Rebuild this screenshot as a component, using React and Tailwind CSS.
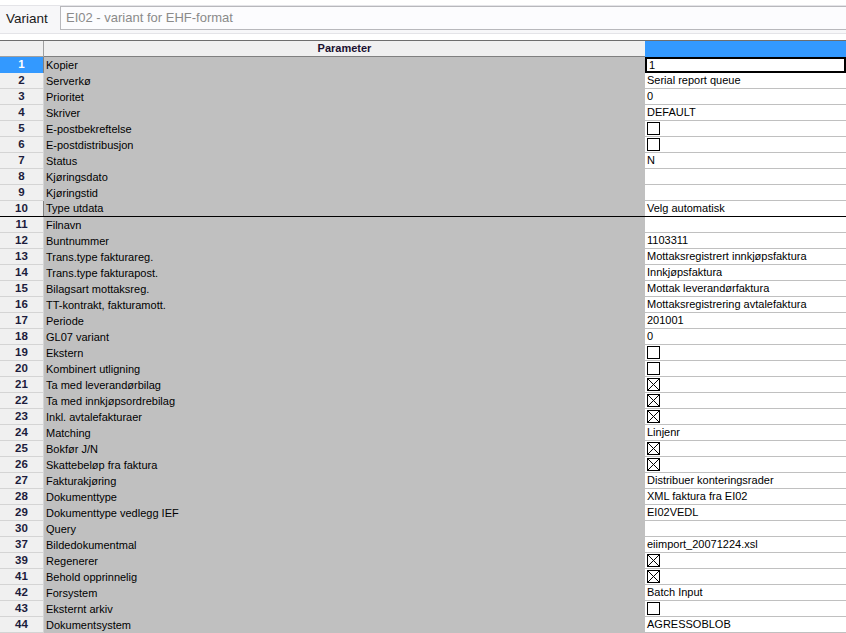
import React from 'react';

const rows = [
  [1, 'Kopier', '1'],
  [2, 'Serverkø', 'Serial report queue'],
  [3, 'Prioritet', '0'],
  [4, 'Skriver', 'DEFAULT'],
  [5, 'E-postbekreftelse', false],
  [6, 'E-postdistribusjon', false],
  [7, 'Status', 'N'],
  [8, 'Kjøringsdato', ''],
  [9, 'Kjøringstid', ''],
  [10, 'Type utdata', 'Velg automatisk'],
  [11, 'Filnavn', ''],
  [12, 'Buntnummer', '1103311'],
  [13, 'Trans.type fakturareg.', 'Mottaksregistrert innkjøpsfaktura'],
  [14, 'Trans.type fakturapost.', 'Innkjøpsfaktura'],
  [15, 'Bilagsart mottaksreg.', 'Mottak leverandørfaktura'],
  [16, 'TT-kontrakt, fakturamott.', 'Mottaksregistrering avtalefaktura'],
  [17, 'Periode', '201001'],
  [18, 'GL07 variant', '0'],
  [19, 'Ekstern', false],
  [20, 'Kombinert utligning', false],
  [21, 'Ta med leverandørbilag', true],
  [22, 'Ta med innkjøpsordrebilag', true],
  [23, 'Inkl. avtalefakturaer', true],
  [24, 'Matching', 'Linjenr'],
  [25, 'Bokfør J/N', true],
  [26, 'Skattebeløp fra faktura', true],
  [27, 'Fakturakjøring', 'Distribuer konteringsrader'],
  [28, 'Dokumenttype', 'XML faktura fra EI02'],
  [29, 'Dokumenttype vedlegg IEF', 'EI02VEDL'],
  [30, 'Query', ''],
  [37, 'Bildedokumentmal', 'eiimport_20071224.xsl'],
  [39, 'Regenerer', true],
  [41, 'Behold opprinnelig', true],
  [42, 'Forsystem', 'Batch Input'],
  [43, 'Eksternt arkiv', false],
  [44, 'Dokumentsystem', 'AGRESSOBLOB'],
];

const Check = ({ on }) => (
  <svg width="13" height="13" viewBox="0 0 13 13" className="block">
    <rect x="0.5" y="0.5" width="12" height="12" fill="white" stroke="black" />
    {on && <path d="M1 1 L12 12 M12 1 L1 12" stroke="black" strokeWidth="1" />}
  </svg>
);

export default function App() {
  return (
    <div className="w-[846px] h-[633px] overflow-hidden bg-white text-[11px] text-black font-['Liberation_Sans',Arial,sans-serif]">
      {/* Variant bar */}
      <div className="h-[40px] bg-white pt-[5px]">
        <div className="flex h-[29px] border-y border-[#e4e4e8] bg-[#f7f7f9]">
          <div className="w-[60px] pl-[6px] flex items-center text-[13.5px] text-[#1a1a1a]">Variant</div>
          <div className="flex-1 h-[24px] border border-r-0 border-[#b8b8bc] bg-[#fcfcfe] pl-[5px] flex items-center text-[13px] text-[#8a8a8a]">
            EI02 - variant for EHF-format
          </div>
        </div>
      </div>

      {/* Grid */}
      <div className="border-t border-[#6e6e6e]">
        <div className="flex h-[16px]">
          <div className="w-[44px] bg-[#f0f0f0] border-r border-[#a0a0a0] border-b border-[#808080]" />
          <div className="flex-1 bg-[#f0f0f0] border-b border-[#808080] flex items-center justify-center font-bold text-[11px] text-[#1a1030]">
            Parameter
          </div>
          <div className="w-[201px] bg-[#3399ff] border-b border-[#3399ff]" />
        </div>

        {rows.map(([n, label, val], i) => {
          const first = i === 0;
          const split = n === 10;
          return (
            <div key={n} className={`flex h-[16px] ${split ? 'border-b border-black' : ''}`}>
              <div
                className={`w-[44px] shrink-0 flex items-center justify-center font-bold text-[11.5px] border-r border-[#808080] ${
                  first ? 'bg-[#3399ff] text-white' : `bg-[#f0f0f0] text-[#1c1c3c] ${split ? '' : 'border-b border-[#d4d4d4]'}`
                }`}
              >
                {n}
              </div>
              <div className="flex-1 bg-[#c0c0c0] flex items-center pl-[2px] whitespace-nowrap">{label}</div>
              <div
                className={`w-[201px] shrink-0 flex items-center pl-[2px] whitespace-nowrap bg-white ${
                  first ? 'border-2 border-black' : split ? '' : 'border-b border-[#c0c0c0]'
                }`}
              >
                {typeof val === 'boolean' ? <Check on={val} /> : val}
              </div>
            </div>
          );
        })}
      </div>
    </div>
  );
}
